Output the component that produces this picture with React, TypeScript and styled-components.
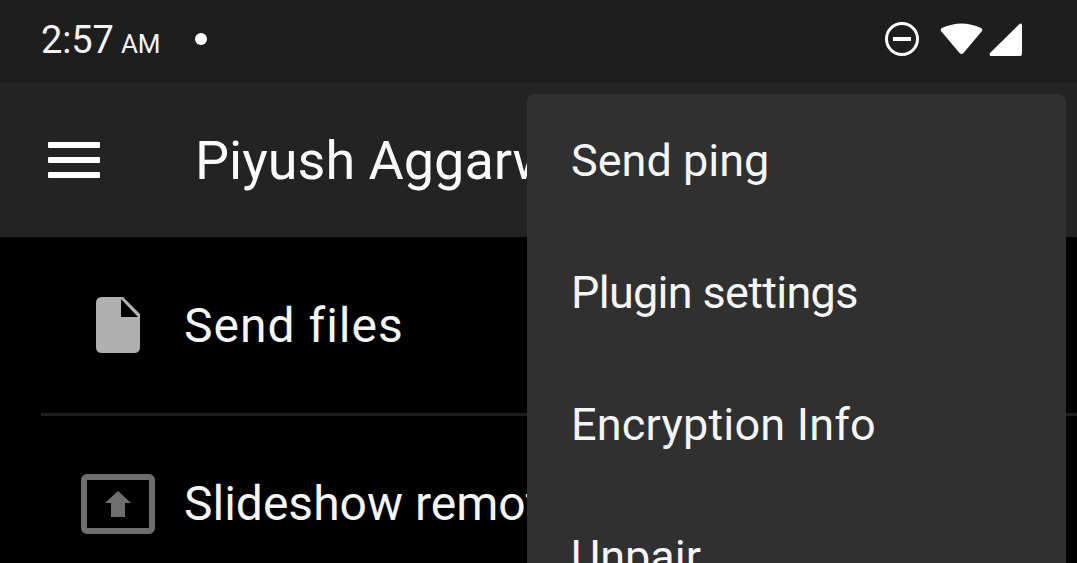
import { createGlobalStyle } from "styled-components"
import styled from "styled-components"

const GlobalStyle = createGlobalStyle`
  html, body {
    margin: 0;
    padding: 0;
    background: #000;
    overflow: hidden;
  }
  body {
    font-family: "Roboto", "Liberation Sans", sans-serif;
    color: #fff;
  }
`

const Screen = styled.div`
  position: relative;
  width: 1077px;
  height: 563px;
  overflow: hidden;
  background: #000;
  display: flex;
  flex-direction: column;
`

const StatusBar = styled.div`
  height: 83px;
  flex: none;
  background: #1e1e1e;
  display: flex;
  align-items: center;
  padding: 0 55px 4px 41px;
  box-sizing: border-box;
`

const Clock = styled.div`
  font-size: 38px;
  letter-spacing: -0.1px;
  color: #f4f4f4;

  small {
    font-size: 26px;
    margin-left: 7px;
  }
`

const Dot = styled.div`
  width: 12px;
  height: 12px;
  border-radius: 50%;
  background: #fff;
  margin-left: 35px;
  margin-bottom: 2px;
`

const StatusIcons = styled.div`
  margin-left: auto;
  margin-bottom: 1px;
  height: 36px;
  display: flex;
  align-items: flex-start;

  svg:nth-child(2) {
    margin-left: 20px;
  }

  svg:nth-child(3) {
    margin-left: 6px;
    margin-top: 2px;
  }
`

const Toolbar = styled.div`
  height: 154px;
  flex: none;
  background: #232323;
  display: flex;
  align-items: center;
  padding-left: 48px;
  box-sizing: border-box;
`

const Burger = styled.div`
  width: 52px;
  display: flex;
  flex-direction: column;
  gap: 9px;
  margin-right: 96px;

  span {
    height: 6px;
    background: #fff;
    border-radius: 1px;
  }
`

const Title = styled.div`
  font-size: 54px;
  margin-left: -1px;
  white-space: nowrap;
  color: #fafafa;
`

const Row = styled.div<{ $height: number; $iconWidth: number; $tracking: number; $iconDrop: number }>`
  height: ${(p) => p.$height}px;
  flex: none;
  display: flex;
  align-items: center;
  padding-left: ${(p) => 118 - p.$iconWidth / 2}px;
  white-space: nowrap;
  font-size: 48px;
  letter-spacing: ${(p) => p.$tracking}px;
  color: #f5f5f5;

  svg {
    flex: none;
    margin-top: ${(p) => p.$iconDrop}px;
    margin-right: ${(p) => 66 - p.$iconWidth / 2}px;
  }
`

const Divider = styled.div`
  height: 3px;
  flex: none;
  margin-left: 41px;
  background: #1f1f1f;
`

const Menu = styled.div`
  position: absolute;
  top: 94px;
  left: 527px;
  width: 539px;
  height: 520px;
  background: #303030;
  border-radius: 8px;
  display: flex;
  flex-direction: column;
`

const MenuItem = styled.div<{ $tracking: number }>`
  height: 132px;
  flex: none;
  display: flex;
  align-items: center;
  padding-left: 44px;
  font-size: 45px;
  letter-spacing: ${(p) => p.$tracking}px;
  color: #f5f5f5;
`

const menuItems = [
  { label: "Send ping", tracking: 0 },
  { label: "Plugin settings", tracking: -0.7 },
  { label: "Encryption Info", tracking: 0.2 },
  { label: "Unpair", tracking: 0 },
]

export default function App() {
  return (
    <Screen>
      <GlobalStyle />
      <StatusBar>
        <Clock>
          2:57<small>AM</small>
        </Clock>
        <Dot />
        <StatusIcons>
          <svg width="36" height="36" viewBox="0 0 36 36">
            <circle cx="18" cy="18" r="15.5" fill="none" stroke="#fff" strokeWidth="3" />
            <rect x="9" y="16" width="18" height="4" fill="#fff" />
          </svg>
          <svg width="43" height="34" viewBox="0 0 43 34">
            <path d="M1 10 Q0 8 2 7 Q21.500 -2 41 7 Q43 8 42 10 L23.500 32 Q21.500 34 19.500 32 Z" fill="#fff" />
          </svg>
          <svg width="33" height="33" viewBox="0 0 33 33">
            <path d="M1 30 L30 1.500 Q33 -1 33 3 L33 31 Q33 33 31 33 L2 33 Q0 33 1 30 Z" fill="#fff" />
          </svg>
        </StatusIcons>
      </StatusBar>
      <Toolbar>
        <Burger>
          <span />
          <span />
          <span />
        </Burger>
        <Title>Piyush Aggarwal</Title>
      </Toolbar>
      <Row $height={176} $iconWidth={44} $tracking={1} $iconDrop={0}>
        <svg width="44" height="56" viewBox="0 0 44 56">
          <path
            d="M6 0 H27 L44 17 V50 Q44 56 38 56 H6 Q0 56 0 50 V6 Q0 0 6 0 Z M25 2 V20 H42 Z"
            fill="#b0b0b0"
            fillRule="evenodd"
          />
        </svg>
        Send files
      </Row>
      <Divider />
      <Row $height={174} $iconWidth={74} $tracking={0} $iconDrop={2}>
        <svg width="74" height="60" viewBox="0 0 74 60">
          <rect x="3" y="3" width="68" height="54" rx="3" fill="none" stroke="#6e6e6e" strokeWidth="6" />
          <path d="M37 17 L50 29 H44 V43 H30 V29 H24 Z" fill="#6e6e6e" />
        </svg>
        Slideshow remote
      </Row>
      <Menu>
        {menuItems.map((item) => (
          <MenuItem key={item.label} $tracking={item.tracking}>
            {item.label}
          </MenuItem>
        ))}
      </Menu>
    </Screen>
  )
}
